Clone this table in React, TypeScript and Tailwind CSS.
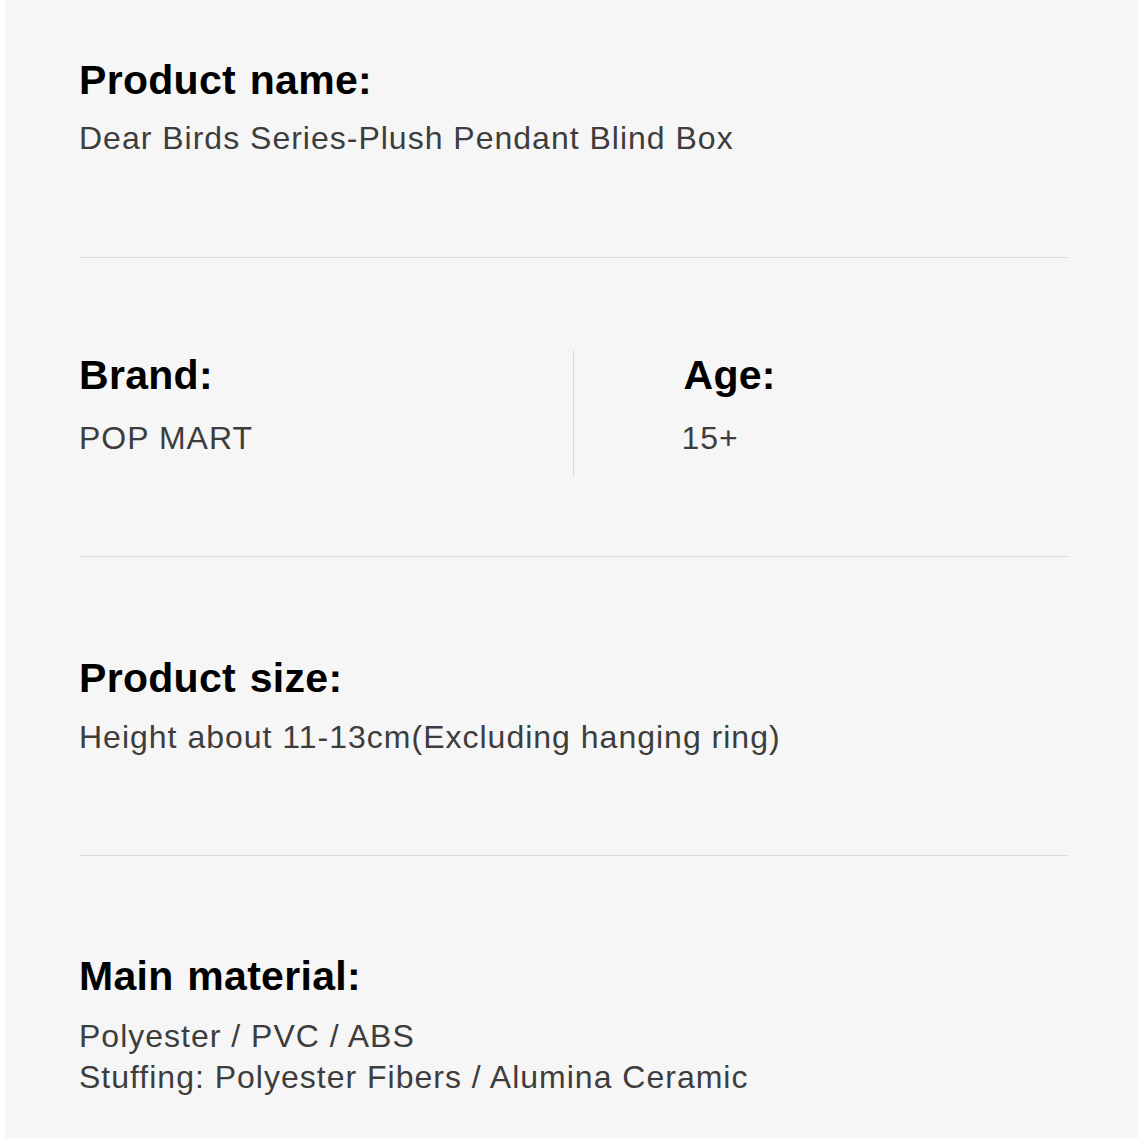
const font = { fontFamily: '"Liberation Sans", Arial, Helvetica, sans-serif' }

function Heading({ children }: { children: React.ReactNode }) {
  return <h2 className="text-[41px] font-bold leading-[48px] tracking-[0.3px] text-black [word-spacing:2px]">{children}</h2>
}

function Value({ children, className = "" }: { children: React.ReactNode; className?: string }) {
  return <p className={`text-[32px] leading-[41px] tracking-[1px] text-[#3d3d3d] ${className}`}>{children}</p>
}

export default function App() {
  return (
    <div style={font} className="h-[1138px] w-[1138px] overflow-hidden border-l-[5px] border-white bg-[#f6f6f6] pl-[74px] pr-[70px]">
      <section className="pt-[56px] pb-[98px]">
        <Heading>Product name:</Heading>
        <Value className="mt-[14px]">Dear Birds Series-Plush Pendant Blind Box</Value>
      </section>
      <div className="h-px bg-[#dcdcdc]" />

      <section className="grid grid-cols-2 pt-[92px] pb-[79px]">
        <div className="border-r border-[#dcdcdc] pt-px pb-[18px]">
          <Heading>Brand:</Heading>
          <Value className="mt-[19px]">POP MART</Value>
        </div>
        <div className="pl-[110px] pt-px pb-[18px]">
          <Heading>Age:</Heading>
          <Value className="mt-[19px] -ml-[2px]">15+</Value>
        </div>
      </section>
      <div className="h-px bg-[#dcdcdc]" />

      <section className="pt-[97px] pb-[97px]">
        <Heading>Product size:</Heading>
        <Value className="mt-[15px]">Height about 11-13cm(Excluding hanging ring)</Value>
      </section>
      <div className="h-px bg-[#dcdcdc]" />

      <section className="pt-[96px]">
        <Heading>Main material:</Heading>
        <Value className="mt-[16px]">
          Polyester / PVC / ABS
          <br />
          Stuffing: Polyester Fibers / Alumina Ceramic
        </Value>
      </section>
    </div>
  )
}
